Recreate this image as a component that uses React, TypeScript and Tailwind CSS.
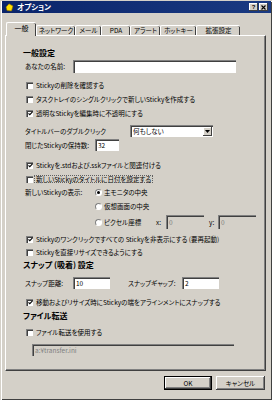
import React from "react";

const font = "[font-family:'Noto_Sans_CJK_JP','Noto_Sans',sans-serif] [font-feature-settings:'palt']";

function Check({ on }: { on?: boolean }) {
  return (
    <span className="w-[7px] h-[7px] shrink-0 bg-white border-t border-l border-[#808080] border-r-white border-b-white shadow-[inset_1px_1px_0_#404040] flex items-center justify-center">
      {on && (
        <svg width="5" height="5" viewBox="0 0 5 5">
          <path d="M0.5 2.3 L1.8 3.6 L4.5 0.9" stroke="#000" strokeWidth="1.1" fill="none" />
        </svg>
      )}
    </span>
  );
}

function Radio({ on }: { on?: boolean }) {
  return (
    <span className="w-[7px] h-[7px] shrink-0 rounded-full bg-white border border-t-[#808080] border-l-[#808080] border-r-white border-b-white flex items-center justify-center">
      {on && <span className="w-[3px] h-[3px] rounded-full bg-black" />}
    </span>
  );
}

function Field({ w, h, value, disabled }: { w: string; h: string; value?: string; disabled?: boolean }) {
  return (
    <span
      className={`${w} ${h} shrink-0 border-t border-l border-[#808080] border-r-white border-b-white shadow-[inset_1px_1px_0_#404040] flex items-center pl-[2px] ${
        disabled ? "bg-[#d4d0c8] text-[#808080]" : "bg-white text-black"
      }`}
    >
      {value}
    </span>
  );
}

function CheckRow({ on, label, className = "", focus }: { on?: boolean; label: string; className?: string; focus?: boolean }) {
  return (
    <div className={`flex items-center ml-[1px] gap-[2px] ${className}`}>
      <Check on={on} />
      <span className={focus ? "outline outline-1 outline-dotted outline-[#606060] px-[1px]" : "px-[1px]"}>{label}</span>
    </div>
  );
}

const tabs = [
  { label: "ネットワーク", w: "w-[39px]" },
  { label: "メール", w: "w-[26px]" },
  { label: "PDA", w: "w-[29px]" },
  { label: "アラート", w: "w-[30px]" },
  { label: "ホットキー", w: "w-[36px]" },
  { label: "拡張設定", w: "w-[44px]" },
];

export default function App() {
  return (
    <div className={`w-[272px] h-[400px] bg-[#d4d0c8] text-black text-[6.5px] leading-none overflow-hidden border-l border-t border-[#d4d0c8] shadow-[inset_1px_1px_0_#fff,inset_-1px_-1px_0_#404040] ${font}`}>
      {/* title bar */}
      <div className="h-[12px] mx-[1px] bg-gradient-to-r from-[#0a246a] to-[#1a3a82] flex items-center pl-[3px] pr-[3px]">
        <svg width="9" height="9" viewBox="0 0 9 9" className="shrink-0">
          <path d="M1 4 L4 0.8 L8 3 L6.5 8 L2 7.5 Z" fill="#ffe000" stroke="#8a6a00" strokeWidth="0.6" />
        </svg>
        <span className="ml-[3px] text-white font-bold text-[7.5px]">オプション</span>
        <div className="ml-auto flex gap-[1px]">
          <span className="w-[9px] h-[8px] bg-[#d4d0c8] shadow-[inset_-1px_-1px_0_#404040,inset_1px_1px_0_#fff] flex items-center justify-center font-bold text-[6px] [font-family:'Liberation_Sans',sans-serif]">?</span>
          <span className="w-[9px] h-[8px] bg-[#d4d0c8] shadow-[inset_-1px_-1px_0_#404040,inset_1px_1px_0_#fff] flex items-center justify-center">
            <svg width="5" height="5" viewBox="0 0 5 5">
              <path d="M0.5 0.5 L4.5 4.5 M4.5 0.5 L0.5 4.5" stroke="#000" strokeWidth="1.1" />
            </svg>
          </span>
        </div>
      </div>

      {/* tabs */}
      <div className="mt-[9px] ml-[5px] h-[13px] flex items-end relative z-10">
        <div className="w-[30px] h-[14px] -mb-[1px] bg-[#d4d0c8] border-l border-t border-white rounded-tl-[2px] rounded-tr-[2px] shadow-[inset_-1px_0_0_#404040] flex items-center justify-center pb-[2px] text-[7px]">
          一般
        </div>
        {tabs.map((t) => (
          <div
            key={t.label}
            className={`${t.w} h-[10px] border-l border-t border-white rounded-tl-[2px] rounded-tr-[2px] shadow-[inset_-1px_0_0_#404040] flex items-center justify-center text-[6.5px]`}
          >
            {t.label}
          </div>
        ))}
      </div>

      {/* panel */}
      <div className="ml-[4px] w-[261px] h-[336px] border-l border-t border-white border-r border-b border-r-[#404040] border-b-[#404040] shadow-[inset_-1px_-1px_0_#808080] pt-[10px] pl-[19px]">
        <div className="h-[13px] -ml-[2px] flex items-center font-bold text-[8px]">一般設定</div>
        <div className="h-[14px] flex items-center">
          <span className="w-[48px]">あなたの名前:</span>
          <Field w="w-[163px]" h="h-[13px]" />
        </div>
        <CheckRow className="mt-[5px] h-[14px]" label="Stickyの削除を確認する" />
        <CheckRow className="h-[14px]" label="タスクトレイのシングルクリックで新しいStickyを作成する" />
        <CheckRow className="h-[14px]" on label="透明なStickyを編集時に不透明にする" />
        <div className="mt-[4px] h-[14px] flex items-center">
          <span className="w-[105px]">タイトルバーのダブルクリック</span>
          <span className="w-[83px] h-[12px] bg-white border-t border-l border-[#808080] border-r-white border-b-white shadow-[inset_1px_1px_0_#404040] flex items-center">
            <span className="flex-1 pl-[2px]">何もしない</span>
            <span className="w-[9px] h-[9px] mr-[1px] bg-[#d4d0c8] shadow-[inset_-1px_-1px_0_#404040,inset_1px_1px_0_#fff] flex items-center justify-center">
              <svg width="5" height="3" viewBox="0 0 5 3">
                <path d="M0 0 L5 0 L2.5 3 Z" fill="#000" />
              </svg>
            </span>
          </span>
        </div>
        <div className="h-[14px] flex items-center">
          <span className="w-[70px]">閉じたStickyの保持数:</span>
          <Field w="w-[24px]" h="h-[12px]" value="32" />
        </div>
        <CheckRow className="mt-[6px] h-[14px]" on label="Stickyを.stdおよび.sskファイルと関連付ける" />
        <CheckRow className="h-[14px]" focus label="新しいStickyのタイトルに日付を設定する" />
        <div className="h-[13px] flex items-center">
          <span className="w-[70px]">新しいStickyの表示:</span>
          <Radio on />
          <span className="ml-[2px]">主モニタの中央</span>
        </div>
        <div className="h-[14px] flex items-center pl-[70px]">
          <Radio />
          <span className="ml-[2px]">仮想画面の中央</span>
        </div>
        <div className="mt-[2px] h-[14px] flex items-center pl-[70px]">
          <Radio />
          <span className="ml-[2px] w-[52px]">ピクセル座標</span>
          <span className="w-[10px]">x:</span>
          <Field w="w-[38px]" h="h-[14px]" value="0" disabled />
          <span className="ml-[5px] w-[9px]">y:</span>
          <Field w="w-[38px]" h="h-[14px]" value="0" disabled />
        </div>
        <CheckRow className="mt-[3px] h-[14px]" on label="Stickyのワンクリックですべての Stickyを非表示にする (要再起動)" />
        <CheckRow className="h-[13px]" label="Stickyを直接リサイズできるようにする" />
        <div className="h-[12px] -ml-[2px] flex items-center font-bold text-[8px]">スナップ (吸着) 設定</div>
        <div className="mt-[5px] h-[14px] flex items-center">
          <span className="w-[48px]">スナップ距離:</span>
          <Field w="w-[37px]" h="h-[12px]" value="10" />
          <span className="ml-[18px] w-[54px]">スナップギャップ:</span>
          <Field w="w-[37px]" h="h-[12px]" value="2" />
        </div>
        <CheckRow className="mt-[5px] h-[14px]" on label="移動およびリサイズ時にStickyの端をアラインメントにスナップする" />
        <div className="h-[14px] -ml-[2px] flex items-center font-bold text-[8px]">ファイル転送</div>
        <CheckRow className="mt-[2px] h-[14px]" label="ファイル転送を使用する" />
        <div className="mt-[5px] ml-[7px]">
          <Field w="w-[202px]" h="h-[12px]" value="a:¥transfer.ini" disabled />
        </div>
      </div>

      {/* buttons */}
      <div className="mt-[5px] flex justify-end gap-[4px] pr-[7px]">
        <button className="w-[48px] h-[14px] border border-black bg-[#d4d0c8] shadow-[inset_-1px_-1px_0_#404040,inset_1px_1px_0_#fff,inset_-2px_-2px_0_#808080] flex items-center justify-center text-[6.5px]">
          OK
        </button>
        <button className="w-[49px] h-[14px] bg-[#d4d0c8] shadow-[inset_-1px_-1px_0_#404040,inset_1px_1px_0_#fff,inset_-2px_-2px_0_#808080] flex items-center justify-center text-[6.5px]">
          キャンセル
        </button>
      </div>
    </div>
  );
}
